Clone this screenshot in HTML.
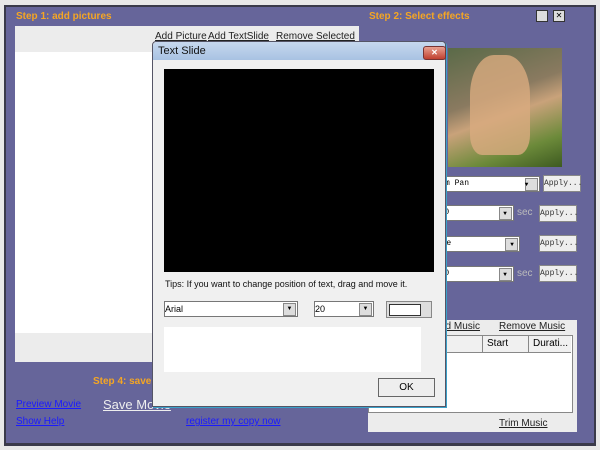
<!DOCTYPE html><html><head><style>
body{margin:0;width:600px;height:450px;background:#e8e8e8;position:relative;overflow:hidden;font-family:"Liberation Sans",sans-serif;font-size:10px}
.a{position:absolute}
.or{color:#f5a623;font-weight:bold;font-size:10px}
.u{text-decoration:underline;color:#222;font-size:10px}
.combo{background:#fff;border:1px solid #777;height:14px;font-size:8px;font-family:"Liberation Mono",monospace;line-height:14px;white-space:nowrap;overflow:hidden}
.combo .dd{position:absolute;right:1px;top:1px;width:11px;height:11px;background:#ddd;border:1px solid #888;font-size:6px;text-align:center;line-height:11px}
.btn{background:#eee;border:1px solid #888;font-size:8px;font-family:"Liberation Mono",monospace;text-align:center;line-height:15px;height:15px;color:#333}
</style></head><body>
<div class="a" style="left:4px;top:5px;width:592px;height:441px;background:#3a3a4a"></div>
<div class="a" style="left:6px;top:7px;width:588px;height:436px;background:#66659a"></div>
<div class="a or" style="left:16px;top:11px">Step 1: add pictures</div>
<div class="a or" style="left:369px;top:11px">Step 2: Select effects</div>
<div class="a" style="left:536px;top:10px;width:10px;height:10px;background:#ddd;border:1px solid #333"></div>
<div class="a" style="left:553px;top:10px;width:10px;height:10px;background:#ddd;border:1px solid #333;font-size:8px;line-height:10px;text-align:center">✕</div>
<div class="a" style="left:15px;top:26px;width:344px;height:336px;background:#ececec"></div>
<div class="a" style="left:15px;top:52px;width:344px;height:281px;background:#fff"></div>
<div class="a u" style="left:155px;top:31px">Add Picture</div>
<div class="a u" style="left:208px;top:31px">Add TextSlide</div>
<div class="a u" style="left:276px;top:31px">Remove Selected</div>
<div class="a" style="left:448px;top:48px;width:114px;height:119px;background:linear-gradient(160deg,#5a6a48,#8a7a60 40%,#c9a27a 55%,#6c8a3a 80%,#3d5a20)"></div>
<div class="a" style="left:470px;top:55px;width:60px;height:100px;border-radius:40% 40% 20% 20%;background:#d9ab7f;opacity:.8"></div>
<div class="a combo" style="left:430px;top:176px;width:108px;text-indent:-10px">Random Pan<div class="dd">▼</div></div>
<div class="a btn" style="left:543px;top:175px;width:36px">Apply...</div>
<div class="a combo" style="left:430px;top:205px;width:82px;text-indent:-1px">2.00<div class="dd">▼</div></div>
<div class="a" style="left:517px;top:207px;color:#bbb;font-size:10px">sec</div>
<div class="a btn" style="left:539px;top:205px;width:36px">Apply...</div>
<div class="a combo" style="left:430px;top:236px;width:88px;text-indent:1px">Fade<div class="dd">▼</div></div>
<div class="a btn" style="left:539px;top:235px;width:36px">Apply...</div>
<div class="a combo" style="left:430px;top:266px;width:82px;text-indent:-1px">2.00<div class="dd">▼</div></div>
<div class="a" style="left:517px;top:268px;color:#bbb;font-size:10px">sec</div>
<div class="a btn" style="left:539px;top:265px;width:36px">Apply...</div>
<div class="a" style="left:368px;top:320px;width:209px;height:112px;background:#ececec"></div>
<div class="a u" style="left:440px;top:321px">dd Music</div>
<div class="a u" style="left:499px;top:321px">Remove Music</div>
<div class="a" style="left:368px;top:335px;width:203px;height:76px;background:#fff;border:1px solid #888"></div>
<div class="a" style="left:368px;top:336px;width:203px;height:16px;background:#f0f0f0;border-bottom:1px solid #888"></div>
<div class="a" style="left:482px;top:336px;height:16px;border-left:1px solid #888;padding-left:4px;line-height:16px">Start</div>
<div class="a" style="left:528px;top:336px;height:16px;border-left:1px solid #888;padding-left:4px;line-height:16px">Durati...</div>
<div class="a u" style="left:499px;top:418px">Trim Music</div>
<div class="a or" style="left:93px;top:376px">Step 4: save</div>
<div class="a" style="left:16px;top:399px;color:#1a1aff;text-decoration:underline">Preview Movie</div>
<div class="a" style="left:103px;top:397px;color:#eee;text-decoration:underline;font-size:13px">Save Movie</div>
<div class="a" style="left:16px;top:416px;color:#1a1aff;text-decoration:underline">Show Help</div>
<div class="a" style="left:186px;top:416px;color:#1a1aff;text-decoration:underline">register my copy now</div>
<div class="a" style="left:152px;top:41px;width:292px;height:364px;background:#f0f0f0;border:1px solid #556;border-radius:4px 4px 0 0;box-shadow:1px 1px 0 #3aa0c8"></div>
<div class="a" style="left:153px;top:42px;width:292px;height:18px;background:linear-gradient(#c6d8ee,#a8c2e2);border-radius:4px 4px 0 0"></div>
<div class="a" style="left:158px;top:45px;font-size:11px;color:#111">Text Slide</div>
<div class="a" style="left:423px;top:46px;width:21px;height:12px;background:linear-gradient(#e8a090,#c04030);border:1px solid #733;border-radius:3px;color:#fff;font-size:8px;text-align:center;line-height:12px;font-weight:bold">✕</div>
<div class="a" style="left:164px;top:69px;width:270px;height:203px;background:#000"></div>
<div class="a" style="left:165px;top:279px;font-size:9px;color:#111">Tips: If you want to change position of text, drag and move it.</div>
<div class="a combo" style="left:164px;top:301px;width:132px;font-family:'Liberation Sans';font-size:9px">Arial<div class="dd">▼</div></div>
<div class="a combo" style="left:314px;top:301px;width:58px;font-family:'Liberation Sans';font-size:9px">20<div class="dd">▼</div></div>
<div class="a" style="left:386px;top:301px;width:44px;height:15px;border:1px solid #888;background:#ddd"><div style="margin:2px;width:30px;height:10px;background:#fff;border:1px solid #333"></div></div>
<div class="a" style="left:164px;top:327px;width:257px;height:45px;background:#fff"></div>
<div class="a" style="left:378px;top:378px;width:55px;height:17px;background:#eee;border:1px solid #666;text-align:center;line-height:17px;font-size:10px">OK</div>
</body></html>
